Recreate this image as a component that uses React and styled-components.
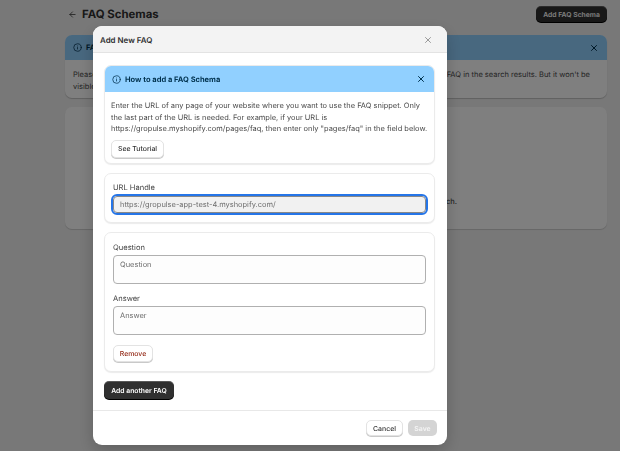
import styled, { createGlobalStyle } from 'styled-components';
import { ArrowLeft, Info, X } from 'lucide-react';

const GlobalStyle = createGlobalStyle`
  html, body {
    margin: 0;
    padding: 0;
    height: 100%;
    background: #f1f1f1;
    font-family: Inter, "Liberation Sans", sans-serif;
    text-rendering: geometricPrecision;
    overflow: hidden;
  }
`;

const Page = styled.div`
  width: 542px;
  margin-left: 65px;
  height: 451px;
  display: flex;
  flex-direction: column;
`;

const TopBar = styled.div`
  height: 35px;
  display: flex;
  align-items: center;
  justify-content: space-between;
  padding-bottom: 8px;
  box-sizing: border-box;
  padding-top: 1px;
`;

const TitleGroup = styled.div`
  display: flex;
  align-items: center;
  gap: 5px;
  margin-left: 3px;
  color: #303030;
`;

const PageTitle = styled.h1`
  margin: 0;
  font-size: 11.4px;
  font-weight: 700;
  color: #303030;
`;

const DarkButton = styled.button`
  background: #303030;
  color: #fff;
  border: 0;
  border-radius: 5px;
  font-family: inherit;
  text-rendering: inherit;
  font-size: 6.8px;
  font-weight: 600;
  height: ${(p) => p.$height}px;
  width: ${(p) => p.$width}px;
  padding: 0;
  box-shadow: 0 1px 0 #000, inset 0 1px 0 rgba(255, 255, 255, 0.2);
`;

const PageBanner = styled.div`
  height: 63px;
  border-radius: 7px;
  background: #fff;
  overflow: hidden;
  box-shadow: 0 1px 1px rgba(0, 0, 0, 0.2);
  flex-shrink: 0;
`;

const PageBannerHead = styled.div`
  height: 25px;
  background: #91d0ff;
  display: flex;
  align-items: center;
  justify-content: space-between;
  padding: 0 8px 0 8px;
  color: #00324f;
  font-size: 7.5px;
  font-weight: 700;
`;

const HeadTitle = styled.div`
  display: flex;
  align-items: center;
  gap: 4px;
`;

const PageBannerText = styled.p`
  margin: 0;
  padding: 9px 17px 0 8px;
  font-size: 7.5px;
  line-height: 11.5px;
  color: #4a4a4a;
`;

const SpacerRight = styled.span`
  float: right;
`;

const PageCard = styled.div`
  margin-top: 9px;
  height: 122px;
  border-radius: 7px;
  background: #fff;
  box-shadow: 0 1px 1px rgba(0, 0, 0, 0.15);
  display: flex;
  align-items: flex-end;
  justify-content: flex-end;
  padding: 0 0 23px 0;
  box-sizing: border-box;
  font-size: 7.5px;
  color: #4a4a4a;
`;

const CardTail = styled.span`
  margin-right: 150px;
  font-weight: 500;
`;

const Overlay = styled.div`
  position: fixed;
  inset: 0;
  background: rgba(0, 0, 0, 0.5);
`;

const Modal = styled.div`
  position: absolute;
  left: 93px;
  top: 26px;
  width: 354px;
  height: 419px;
  background: #fff;
  border-radius: 9px;
  box-shadow: 0 6px 16px rgba(0, 0, 0, 0.2);
  display: flex;
  flex-direction: column;
  overflow: hidden;
`;

const ModalHead = styled.div`
  height: 27px;
  flex-shrink: 0;
  background: #f3f3f3;
  border-bottom: 1px solid #e3e3e3;
  box-sizing: border-box;
  display: flex;
  align-items: center;
  justify-content: space-between;
  padding: 1px 14px 0 7px;
  color: #303030;
  font-size: 7.95px;
  font-weight: 600;
`;

const ModalBody = styled.div`
  flex: 1;
  padding: 12px 12px 0 11px;
  display: flex;
  flex-direction: column;
  align-items: flex-start;
`;

const Card = styled.section`
  width: 100%;
  box-sizing: border-box;
  border-radius: 7px;
  border: 1px solid #ebebeb;
  box-shadow: 0 1px 1px rgba(0, 0, 0, 0.08);
  background: #fff;
  overflow: hidden;
  margin-bottom: 9px;
  height: ${(p) => p.$height}px;
  padding: ${(p) => p.$padding || 0};
`;

const InfoHead = styled.div`
  height: 27px;
  margin: -1px -1px 0;
  background: #91d0ff;
  display: flex;
  align-items: center;
  justify-content: space-between;
  padding: 1px 9px 0 8px;
  box-sizing: border-box;
  color: #00324f;
  font-size: 7.5px;
  font-weight: 700;
`;

const InfoBody = styled.div`
  padding: 8px 2px 0 6px;
`;

const InfoText = styled.p`
  margin: 0 0 5px;
  font-size: 7.46px;
  line-height: 11.5px;
  color: #4a4a4a;
`;

const PlainButton = styled.button`
  display: block;
  background: #fff;
  border: 1px solid #e3e3e3;
  border-radius: 5px;
  box-shadow: 0 1px 0 #c9c9c9;
  font-family: inherit;
  text-rendering: inherit;
  font-size: 6.9px;
  font-weight: 500;
  padding: 0;
  color: ${(p) => p.$color || '#303030'};
  width: ${(p) => p.$width}px;
  height: ${(p) => p.$height}px;
`;

const FieldLabel = styled.label`
  display: block;
  font-size: 7.55px;
  line-height: 10px;
  color: #444;
  margin-bottom: 2.5px;
`;

const UrlInput = styled.div`
  height: 17.5px;
  border-radius: 4px;
  background: #f1f1f1;
  border: 1px solid #888;
  outline: 2px solid #2575e8;
  outline-offset: 0;
  box-sizing: border-box;
  display: flex;
  align-items: center;
  padding-left: 6px;
  font-size: 7.46px;
  color: #6e6e6e;
`;

const TextBox = styled.div`
  height: 29px;
  border-radius: 4px;
  background: #fdfdfd;
  border: 1px solid #b0b0b0;
  box-sizing: border-box;
  padding: 4px 6px;
  font-size: 7.46px;
  line-height: 10px;
  color: #6e6e6e;
  margin-bottom: 9.5px;
`;

const ModalFoot = styled.div`
  height: 35px;
  flex-shrink: 0;
  border-top: 1px solid #e8e8e8;
  box-sizing: border-box;
  display: flex;
  align-items: center;
  justify-content: flex-end;
  gap: 5px;
  padding: 0 10px 0 0;
`;

const SaveButton = styled.button`
  width: 29px;
  height: 16px;
  border: 0;
  border-radius: 5px;
  background: #d4d4d4;
  color: #f4f4f4;
  font-family: inherit;
  text-rendering: inherit;
  font-size: 6.9px;
  font-weight: 600;
  padding: 0;
`;

export default function App() {
  return (
    <>
      <GlobalStyle />
      <Page>
        <TopBar>
          <TitleGroup>
            <ArrowLeft size={9} strokeWidth={2} />
            <PageTitle>FAQ Schemas</PageTitle>
          </TitleGroup>
          <DarkButton $width={71} $height={16}>Add FAQ Schema</DarkButton>
        </TopBar>
        <PageBanner>
          <PageBannerHead>
            <HeadTitle>
              <Info size={9} strokeWidth={2} />
              FAQ
            </HeadTitle>
            <X size={10} strokeWidth={2.4} />
          </PageBannerHead>
          <PageBannerText>
            Please
            <SpacerRight>FAQ in the search results. But it won't be</SpacerRight>
            <br />
            visible
          </PageBannerText>
        </PageBanner>
        <PageCard>
          <CardTail>ch.</CardTail>
        </PageCard>
      </Page>
      <Overlay>
        <Modal>
          <ModalHead>
            Add New FAQ
            <X size={10} strokeWidth={1.6} color="#6b6b6b" />
          </ModalHead>
          <ModalBody>
            <Card $height={99}>
              <InfoHead>
                <HeadTitle>
                  <Info size={9} strokeWidth={2} />
                  How to add a FAQ Schema
                </HeadTitle>
                <X size={10} strokeWidth={2.4} />
              </InfoHead>
              <InfoBody>
                <InfoText>
                  Enter the URL of any page of your website where you want to use the FAQ snippet. Only the last part of the URL is needed. For example, if your URL is https://gropulse.myshopify.com/pages/faq, then enter only "pages/faq" in the field below.
                </InfoText>
                <PlainButton $width={53} $height={18}>See Tutorial</PlainButton>
              </InfoBody>
            </Card>
            <Card $height={50} $padding="9px 8px 0 8px">
              <FieldLabel>URL Handle</FieldLabel>
              <UrlInput>https://gropulse-app-test-4.myshopify.com/</UrlInput>
            </Card>
            <Card $height={140} $padding="9.5px 8px 0 8px">
              <FieldLabel>Question</FieldLabel>
              <TextBox>Question</TextBox>
              <FieldLabel>Answer</FieldLabel>
              <TextBox>Answer</TextBox>
              <PlainButton $width={40} $height={17} $color="#8e1f0b">Remove</PlainButton>
            </Card>
            <DarkButton $width={70} $height={18}>Add another FAQ</DarkButton>
          </ModalBody>
          <ModalFoot>
            <PlainButton $width={37} $height={16}>Cancel</PlainButton>
            <SaveButton>Save</SaveButton>
          </ModalFoot>
        </Modal>
      </Overlay>
    </>
  );
}
